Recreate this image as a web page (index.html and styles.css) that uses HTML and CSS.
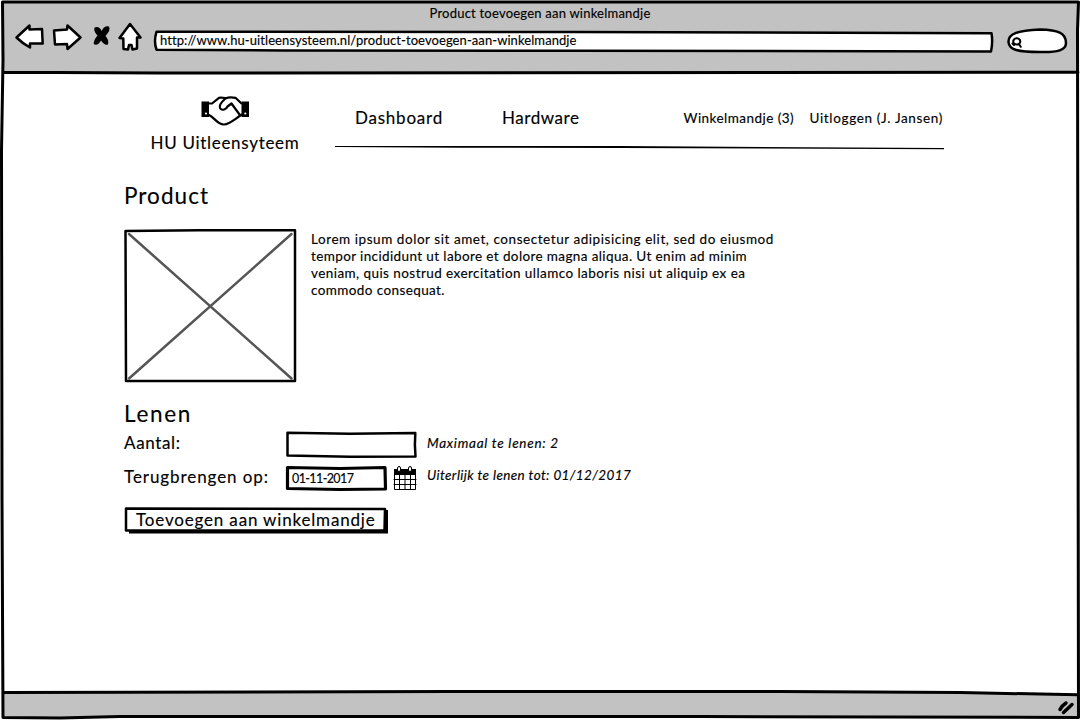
FILE: index.html
```html
<!DOCTYPE html>
<html lang="nl">
<head>
<meta charset="utf-8">
<title>Product toevoegen aan winkelmandje</title>
<link rel="stylesheet" href="styles.css">
</head>
<body>
<div class="window">
  <svg class="frame" viewBox="0 0 1080 720" aria-hidden="true">
    <path class="chrome" d="M3 3H1078V73H3zM3 692.5L780 691.5L1078 694.5V717H3z"/>
    <path class="edge" d="M2.5 2H1078.5L1077.500 30L1078.500 717.500L700 716.500L120 716.500L60 718L3 717.500L2 500L1.500 150L3 60zM3 72.300L160 73L1078 72.300M3 692.500L450 691.500L780 691.500L960 692.500L1078 694.800"/>
    <path class="grip" d="M1060 709.500Q1061.500 706 1066 703M1063.500 712.500L1072 704.500"/>
  </svg>
  <header class="chrome-bar">
    <div class="window-title"><span class="t title-text">Product toevoegen aan winkelmandje</span></div>
    <div class="toolbar">
      <svg class="icon back" viewBox="14 21 32 32"><path d="M16.500 37.500L29.500 25.500V29.500L42 29L42.700 43.500L30 43.500V47.500Q22 43 16.500 37.500z"/></svg>
      <svg class="icon forward" viewBox="51 21 32 32"><path d="M54 30.500L67 29.500L67.500 25.500L80.500 37.500L67.500 49L67 44L55 44.500z"/></svg>
      <svg class="icon stop" viewBox="92 24 20 24"><path class="fill" d="M94.500 27.500Q99 25.500 101.700 31Q104 25.500 109 26.500Q111 30 105.500 36Q109.500 40.500 108 44.500Q104 45.500 101 40.500Q98 46 94 44.300Q92.800 41 97.500 35.500Q93.500 31.500 94.500 27.500z"/></svg>
      <svg class="icon home" viewBox="117 21 26 32"><path d="M130 24L140.500 37.500H137V48.500L132.500 49.500L131.500 45H129L128 49.500L123.500 49L123.300 38.500L119.500 38Z"/></svg>
      <div class="address">
        <svg class="outline" viewBox="0 0 842 25"><path d="M3.500 1.800L420 2L838.500 3.300Q840 12 838 21.500L420 20.800L130 20.500L3.500 19.700Q.5 11 3.500 1.800z"/></svg>
        <span class="t url">http://www.hu-uitleensysteem.nl/product-toevoegen-aan-winkelmandje</span>
      </div>
      <svg class="icon search" viewBox="1006 27 64 28"><path d="M1008.500 42C1008 34 1017 30.500 1040 29.500C1058 30 1066 33 1066 43C1066 50 1058 52.500 1040 52C1018 52 1009 50 1008.500 42z"/><path class="lens" d="M1016.700 38.300a3.500 3.100 0 1 0 .1 0M1019 44L1020.700 46.800M1012.500 43.500L1014 45"/></svg>
    </div>
  </header>
  <main class="page">
    <div class="site-header">
      <div class="brand">
        <svg class="handshake" viewBox="200 95 50 32">
          <path class="fill" d="M201.500 101.500H209V117H201.500zM241.500 101.500H249V117H241.500z"/>
          <path d="M209 103.500H212L219 97.800Q221 97.200 225 98M241.500 103.500L235.500 97.800Q229 96.500 225.500 98.500C221.500 102 218.500 105 220 108C222 111.500 226.500 109 227.500 106.500L231.500 103.500L239.500 114.500M209 115C214 117 218 125 224 124.500C230 124 234 119.500 242 114.500"/>
          <circle class="button-dot" cx="206" cy="113.500" r="1.100"/><circle class="button-dot" cx="245.300" cy="113.500" r="1.100"/>
        </svg>
        <span class="t brand-name">HU Uitleensyteem</span>
      </div>
      <div class="nav">
        <nav class="links">
          <a class="t nav-main dash">Dashboard</a>
          <a class="t nav-main hard">Hardware</a>
          <a class="t nav-small cart">Winkelmandje (3)</a>
          <a class="t nav-small logout">Uitloggen (J. Jansen)</a>
        </nav>
        <svg class="rule" viewBox="335 144 610 6"><path d="M335 146L460 146L620 146L944 148V149.300L620 148L460 147.800L335 147z"/></svg>
      </div>
    </div>
    <h1 class="heading"><span class="t h-product">Product</span></h1>
    <div class="product">
      <svg class="photo" viewBox="123 228 174 156"><path class="box" d="M125.500 231L200 230.300H295V381H126z"/><path class="cross" d="M129 234L291.500 378.500M291.500 234L129 378.500"/></svg>
      <p class="description">
        <span class="t l1">Lorem ipsum dolor sit amet, consectetur adipisicing elit, sed do eiusmod</span>
        <span class="t l2">tempor incididunt ut labore et dolore magna aliqua. Ut enim ad minim</span>
        <span class="t l3">veniam, quis nostrud exercitation ullamco laboris nisi ut aliquip ex ea</span>
        <span class="t l4">commodo consequat.</span>
      </p>
    </div>
    <h2 class="heading"><span class="t h-loan">Lenen</span></h2>
    <div class="form">
      <div class="row amount">
        <label class="label"><span class="t lab1">Aantal:</span></label>
        <div class="field wide"><svg class="outline" viewBox="286 431 131 28"><path d="M287.500 432.700L350 433.700L415.300 433L414.900 445L415.500 456.500L350 456.700L287.500 455.500z"/></svg></div>
        <em class="t hint hint1">Maximaal te lenen: 2</em>
      </div>
      <div class="row date">
        <label class="label"><span class="t lab2">Terugbrengen op:</span></label>
        <div class="field narrow"><svg class="outline" viewBox="286 465 101 27"><path class="heavy" d="M287.500 467.500L340 468.500L385 467.500L385.500 489L340 489.500L287.500 488.500z"/></svg><span class="t date-text">01-11-2017</span></div>
        <svg class="calendar" viewBox="393 465 24 27"><path d="M394.500 470V489.500H415.500V470z"/><path class="fill" d="M394 469H416V475H394z"/><path class="grid" d="M399.500 475V489M405 475V489M410.500 475V489M394 479.500H416M394 484.500H416"/><rect x="397.500" y="466.500" width="3" height="5" rx="1.500"/><rect x="408.500" y="466.500" width="3" height="5" rx="1.500"/></svg>
        <em class="t hint hint2">Uiterlijk te lenen tot: 01/12/2017</em>
      </div>
      <button class="submit"><svg class="outline" viewBox="124 507 265 28"><path class="fill" d="M384 510H388V533.500H129V529H384z"/><path class="face" d="M126 508.500L260 508.700L385 509L384.500 530.500H126z"/></svg><span class="t submit-text">Toevoegen aan winkelmandje</span></button>
    </div>
  </main>
</div>
</body>
</html>
```
FILE: styles.css
```css
* { box-sizing: border-box; }
body { margin: 0; background: #fff; color: #000; font-family: Lato, "Noto Sans", sans-serif; font-variant-ligatures: none; -webkit-text-stroke: 0.15px #000; }
svg { display: block; overflow: visible; fill: #fff; stroke: #000; stroke-width: 2.5; stroke-linejoin: round; stroke-linecap: round; flex: none; }
.fill { fill: #000; stroke-width: 0; }
.t { white-space: nowrap; }
.window { position: relative; width: 1080px; height: 720px; overflow: hidden; }
.frame { position: absolute; inset: 0; width: 1080px; height: 720px; z-index: -1; }
.chrome { fill: #c2c2c2; stroke: none; }
.edge { fill: none; stroke-width: 3; }
.grip { fill: none; stroke-width: 3.5; }
.chrome-bar { height: 74px; padding-top: 4px; }
.window-title { text-align: center; height: 17px; font-size: 13px; line-height: 19px; }
.title-text { letter-spacing: 0.22px; }
.toolbar { display: flex; height: 32px; align-items: flex-start; padding-left: 14px; }
.back, .forward { width: 32px; height: 32px; }
.forward { margin-left: 5px; }
.stop { width: 20px; height: 24px; margin: 3px 0 0 9px; }
.home { width: 26px; height: 32px; margin-left: 5px; }
.address { position: relative; width: 842px; height: 25px; margin: 9px 0 0 10px; padding-left: 7px; font-size: 13px; line-height: 21px; }
.url { letter-spacing: 0.08px; }
.outline { position: absolute; inset: 0; width: 100%; height: 100%; z-index: -1; }
.search { width: 64px; height: 28px; margin: 6px 0 0 11px; }
.lens { fill: none; stroke-width: 2; }
.page { padding: 21px 0 0 124px; }
.site-header { display: flex; height: 87px; }
.brand { width: 202px; display: flex; flex-direction: column; align-items: center; font-size: 17px; line-height: 32px; }
.brand-name { letter-spacing: 0.7px; }
.handshake { width: 50px; height: 32px; stroke-width: 2.2; }
.button-dot { stroke: none; }
.nav { width: 620px; padding: 12px 0 0 9px; }
.links { display: flex; align-items: center; height: 22px; padding-left: 20px; }
.nav-main { font-size: 17px; line-height: 20px; margin-top: -1px; }
.dash { width: 147px; letter-spacing: 0.78px; }
.hard { width: 181.5px; letter-spacing: 0.55px; }
.nav-small { font-size: 13.5px; }
.cart { width: 126px; letter-spacing: 0.46px; }
.logout { letter-spacing: 0.66px; }
.rule { width: 610px; height: 6px; margin-top: 15px; fill: #000; stroke: none; }
.heading { margin: 0; font-size: 22.5px; line-height: 28px; font-weight: 400; }
.h-product { letter-spacing: 1.04px; }
.h-loan { letter-spacing: 1.7px; }
.product { display: flex; margin-top: 18px; }
.photo { width: 174px; height: 156px; margin-left: -1px; }
.cross { stroke: #555; }
.description { margin: 3px 0 0 14px; display: flex; flex-direction: column; font-size: 13.5px; line-height: 17px; align-items: flex-start; }
.l1 { letter-spacing: 0.555px; }
.l2 { letter-spacing: 0.385px; }
.l3 { letter-spacing: 0.435px; }
.l4 { letter-spacing: 0.4px; }
.product + .heading { margin-top: 16px; }
.row { display: flex; height: 34px; font-size: 17px; }
.label { width: 162px; line-height: 30px; }
.lab1 { letter-spacing: 0.65px; }
.lab2 { letter-spacing: 0.92px; }
.field { position: relative; }
.wide { width: 131px; height: 28px; margin-top: 3px; }
.narrow { width: 101px; height: 27px; margin-top: 3px; padding-left: 6px; font-size: 12.5px; line-height: 27px; }
.date-text { letter-spacing: -0.6px; }
.heavy { stroke-width: 3.2; }
.calendar { width: 24px; height: 27px; margin: 3px 0 0 6px; stroke-width: 1; }
.grid { fill: none; }
.hint { font-size: 13.5px; line-height: 30px; margin-left: 10px; }
.hint1 { letter-spacing: 0.74px; }
.hint2 { letter-spacing: 0.39px; line-height: 26px; }
.submit { position: relative; display: block; width: 265px; height: 28px; margin: 11px 0 0; padding: 0 0 0 12px; border: 0; background: none; color: #000; font: inherit; font-size: 17px; line-height: 26px; text-align: left; }
.submit-text { display: block; height: 28px; letter-spacing: 0.83px; }
```
